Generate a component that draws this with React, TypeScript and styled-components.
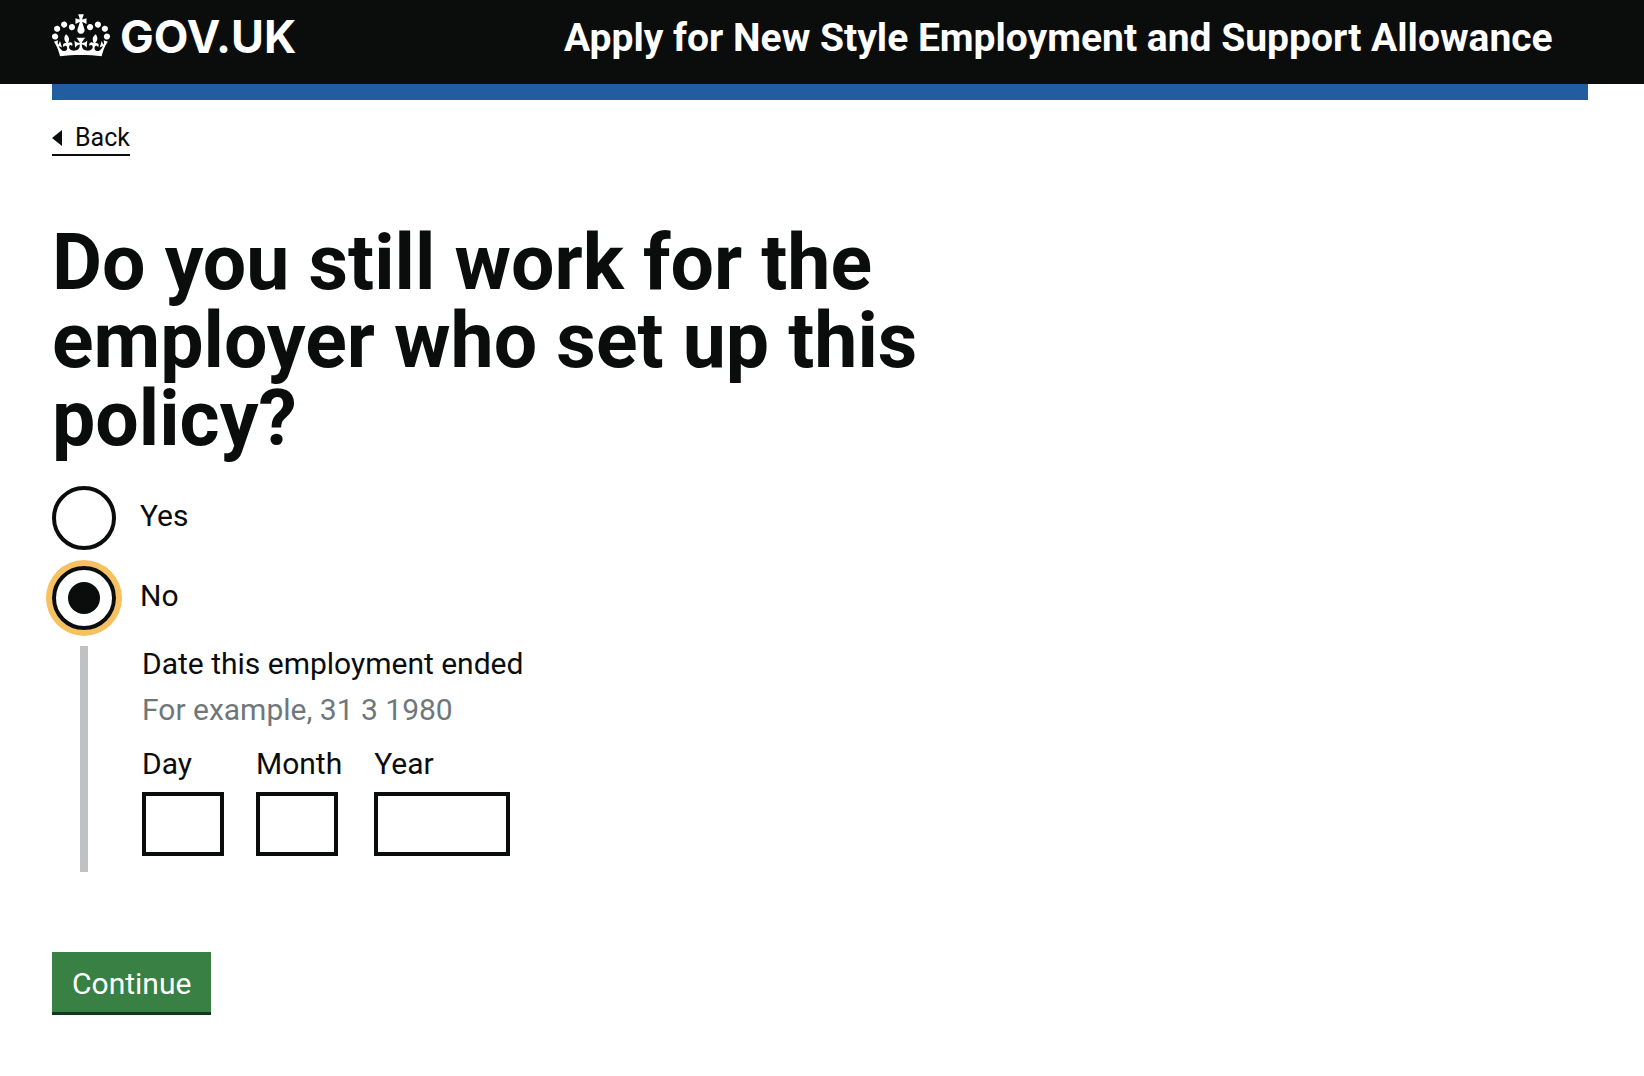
import React, { useState } from "react";
import styled, { createGlobalStyle, css } from "styled-components";

const colour = {
  ink: "#0b0c0c",
  white: "#ffffff",
  blue: "#225e9f",
  grey: "#bfc1c3",
  hint: "#6f777b",
  focus: "#f7c160",
  green: "#388043",
  greenDark: "#12371b",
};

const GlobalStyle = createGlobalStyle`
  *, *::before, *::after { box-sizing: border-box; }
  body {
    margin: 0;
    background: ${colour.white};
    color: ${colour.ink};
    font-family: Roboto, "Liberation Sans", sans-serif;
    font-size: 30px;
    line-height: 40px;
  }
`;

const Width = styled.div`
  margin: 0 56px 0 52px;
`;

const Header = styled.header`
  background: ${colour.ink};
  color: ${colour.white};
`;

const HeaderRow = styled(Width)`
  display: grid;
  grid-template-columns: 1fr 2fr;
  align-items: start;
  height: 84px;
  padding-top: 14px;
`;

const LogoLink = styled.a`
  display: flex;
  align-items: flex-start;
  gap: 10px;
  color: inherit;
  text-decoration: none;
`;

const Crown = styled.svg`
  width: 58px;
  height: 43px;
  fill: currentColor;
`;

const Wordmark = styled.span`
  font-family: Inter, "Liberation Sans", sans-serif;
  font-size: 45px;
  font-weight: 700;
  line-height: 46px;
`;

const ServiceLink = styled.a`
  color: inherit;
  font-size: 39px;
  font-weight: 700;
  line-height: 48px;
  text-decoration: none;
  white-space: nowrap;
`;

const Band = styled(Width)`
  height: 16px;
  background: ${colour.blue};
`;

const BackLink = styled.a`
  display: inline-flex;
  align-items: center;
  gap: 13px;
  margin-top: 22px;
  border-bottom: 2px solid ${colour.ink};
  color: ${colour.ink};
  font-size: 25px;
  line-height: 32px;
  text-decoration: none;

  &::before {
    content: "";
    border: solid transparent;
    border-width: 8px 10px 8px 0;
    border-right-color: ${colour.ink};
  }
`;

const Main = styled.main`
  width: 66.6%;
  padding-top: 68px;
`;

const Fieldset = styled.fieldset`
  min-width: 0;
  margin: 0;
  padding: 0;
  border: 0;
`;

const PageLegend = styled.legend`
  padding: 0;
`;

const Heading = styled.h1`
  margin: 0 0 28px;
  font-size: 77px;
  font-weight: 700;
  line-height: 78px;
`;

const Options = styled.div`
  display: grid;
  gap: 16px;
`;

const Option = styled.label`
  display: flex;
  align-items: center;
  gap: 24px;
  justify-self: start;
  height: 64px;
`;

const Radio = styled.input`
  display: grid;
  place-items: center;
  width: 64px;
  height: 64px;
  margin: 0;
  border: 4px solid ${colour.ink};
  border-radius: 50%;
  appearance: none;
  outline: none;

  &:checked {
    box-shadow: 0 0 0 6px ${colour.focus};
  }

  &:checked::before {
    content: "";
    width: 32px;
    height: 32px;
    border-radius: 50%;
    background: ${colour.ink};
  }
`;

const OptionText = styled.span`
  padding-bottom: 4px;
`;

const Conditional = styled.div`
  margin: 16px 0 0 28px;
  padding: 0 0 16px 54px;
  border-left: 8px solid ${colour.grey};
`;

const Legend = styled.legend`
  padding: 0;
  line-height: 36px;
`;

const Hint = styled.span`
  display: block;
  margin: 8px 0 14px;
  color: ${colour.hint};
`;

const DateParts = styled.div`
  display: flex;
  gap: 32px;
`;

const DatePart = styled.label`
  display: flex;
  flex-direction: column;
  align-items: flex-start;
  gap: 8px;
`;

const DateInput = styled.input<{ $digits: 2 | 4 }>`
  height: 64px;
  padding: 8px;
  border: 4px solid ${colour.ink};
  border-radius: 0;
  font: inherit;
  ${({ $digits }) => ($digits === 4 ? css`width: 136px;` : css`width: 82px;`)}
`;

const Continue = styled.button`
  display: block;
  margin-top: 80px;
  padding: 12px 20px 8px;
  border: 0;
  border-bottom: 3px solid ${colour.greenDark};
  background: ${colour.green};
  color: ${colour.white};
  font: inherit;
`;

function CrownIcon() {
  return (
    <Crown viewBox="0 0 132 97" aria-hidden="true">
      <path
        fillRule="evenodd"
        d="M25 30.2c3.5 1.5 7.7-.2 9.1-3.7 1.5-3.6-.2-7.8-3.9-9.2-3.6-1.4-7.6.3-9.1 3.9-1.4 3.5.3 7.5 3.9 9zM9 39.5c3.6 1.5 7.8-.2 9.2-3.7 1.5-3.6-.2-7.8-3.9-9.1-3.6-1.5-7.6.2-9.1 3.8-1.4 3.5.3 7.5 3.8 9zM4.4 57.2c3.5 1.5 7.7-.2 9.1-3.8 1.5-3.6-.2-7.7-3.9-9.1-3.5-1.5-7.6.3-9.1 3.8-1.4 3.5.3 7.6 3.9 9.1zm38.3-21.4c3.5 1.5 7.7-.2 9.1-3.8 1.5-3.6-.2-7.7-3.9-9.1-3.6-1.5-7.6.3-9.1 3.8-1.3 3.6.4 7.7 3.9 9.1zm64.4-5.6c-3.6 1.5-7.8-.2-9.1-3.7-1.5-3.6.2-7.8 3.8-9.2 3.6-1.4 7.7.3 9.2 3.9 1.3 3.5-.4 7.5-3.9 9zm15.9 9.3c-3.6 1.5-7.7-.2-9.1-3.7-1.5-3.6.2-7.8 3.7-9.1 3.6-1.5 7.7.2 9.2 3.8 1.5 3.5-.3 7.5-3.8 9zm4.7 17.7c-3.6 1.5-7.8-.2-9.2-3.8-1.5-3.6.2-7.7 3.9-9.1 3.6-1.5 7.7.3 9.2 3.8 1.3 3.5-.4 7.6-3.9 9.1zM89.3 35.8c-3.6 1.5-7.8-.2-9.2-3.8-1.4-3.6.2-7.7 3.9-9.1 3.6-1.5 7.7.3 9.2 3.8 1.4 3.6-.3 7.7-3.9 9.1zM69.7 17.7l8.9 4.7V9.3l-8.9 2.8c-.2-.3-.5-.6-.9-.9L72.4 0H59.6l3.5 11.2c-.3.3-.6.5-.9.9l-8.8-2.8v13.1l8.8-4.7c.3.3.6.7.9.9l-5 15.4v.1c-.2.8-.4 1.6-.4 2.4 0 4.1 3.1 7.5 7 8.1h.2c.3 0 .7.1 1 .1.4 0 .7 0 1-.1h.2c4-.6 7.1-4.1 7.1-8.1 0-.8-.1-1.7-.4-2.4V34l-5.1-15.4c.4-.2.7-.6 1-.9zM66 92.8c16.9 0 32.8 1.1 47.1 3.2 4-16.9 8.9-26.7 14-33.5l-9.6-3.4c1 4.9 1.1 7.2 0 10.2-1.5-1.4-3-4.3-4.2-8.7L108.6 76c2.8-2 5-3.2 7.5-3.3-4.4 9.4-10 11.9-13.6 11.2-4.3-.8-6.3-4.6-5.6-7.9 1-4.7 5.7-5.9 8-.5 4.3-8.7-3-11.4-7.6-8.8 7.1-7.2 7.9-13.5 2.1-21.1-8 6.1-8.1 12.3-4.5 20.8-4.7-5.4-12.1-2.5-9.5 6.2 3.4-5.2 7.9-2 7.2 3.1-.6 4.3-6.4 7.8-13.5 7.2-10.3-.9-10.9-8-11.2-13.8 2.5-.5 7.1 1.8 11 7.3L80.2 60c-4.1 4.4-8 5.3-12.3 5.4 1.4-4.4 8-11.6 8-11.6H55.5s6.4 7.2 7.9 11.6c-4.2-.1-8-1-12.3-5.4l1.4 16.4c3.9-5.5 8.5-7.7 10.9-7.3-.3 5.8-.9 12.8-11.1 13.8-7.2.6-12.9-2.9-13.5-7.2-.7-5 3.8-8.3 7.1-3.1 2.7-8.7-4.6-11.6-9.4-6.2 3.7-8.5 3.6-14.7-4.6-20.8-5.8 7.6-5 13.9 2.2 21.1-4.7-2.6-11.9.1-7.7 8.8 2.3-5.5 7.1-4.2 8.1.5.7 3.3-1.3 7.1-5.7 7.9-3.5.7-9-1.8-13.5-11.2 2.5.1 4.7 1.3 7.5 3.3l-4.7-15.4c-1.2 4.4-2.7 7.2-4.3 8.7-1.1-3-.9-5.3 0-10.2l-9.5 3.4c5 6.9 9.9 16.7 14 33.5 14.8-2.1 30.8-3.2 47.7-3.2z"
      />
    </Crown>
  );
}

const dateParts: { name: string; digits: 2 | 4 }[] = [
  { name: "Day", digits: 2 },
  { name: "Month", digits: 2 },
  { name: "Year", digits: 4 },
];

export default function App() {
  const [answer, setAnswer] = useState("No");

  return (
    <>
      <GlobalStyle />
      <Header>
        <HeaderRow>
          <LogoLink href="#">
            <CrownIcon />
            <Wordmark>GOV.UK</Wordmark>
          </LogoLink>
          <ServiceLink href="#">Apply for New Style Employment and Support Allowance</ServiceLink>
        </HeaderRow>
      </Header>
      <Band />
      <Width>
        <BackLink href="#">Back</BackLink>
        <Main>
          <form onSubmit={(event) => event.preventDefault()}>
            <Fieldset>
              <PageLegend>
                <Heading>Do you still work for the employer who set up this policy?</Heading>
              </PageLegend>
              <Options>
                {["Yes", "No"].map((option) => (
                  <Option key={option}>
                    <Radio
                      type="radio"
                      name="still-employed"
                      value={option}
                      checked={answer === option}
                      onChange={() => setAnswer(option)}
                    />
                    <OptionText>{option}</OptionText>
                  </Option>
                ))}
              </Options>
              {answer === "No" && (
                <Conditional>
                  <Fieldset aria-describedby="date-hint">
                    <Legend>Date this employment ended</Legend>
                    <Hint id="date-hint">For example, 31 3 1980</Hint>
                    <DateParts>
                      {dateParts.map(({ name, digits }) => (
                        <DatePart key={name}>
                          {name}
                          <DateInput $digits={digits} type="text" inputMode="numeric" maxLength={digits} />
                        </DatePart>
                      ))}
                    </DateParts>
                  </Fieldset>
                </Conditional>
              )}
            </Fieldset>
            <Continue type="submit">Continue</Continue>
          </form>
        </Main>
      </Width>
    </>
  );
}
